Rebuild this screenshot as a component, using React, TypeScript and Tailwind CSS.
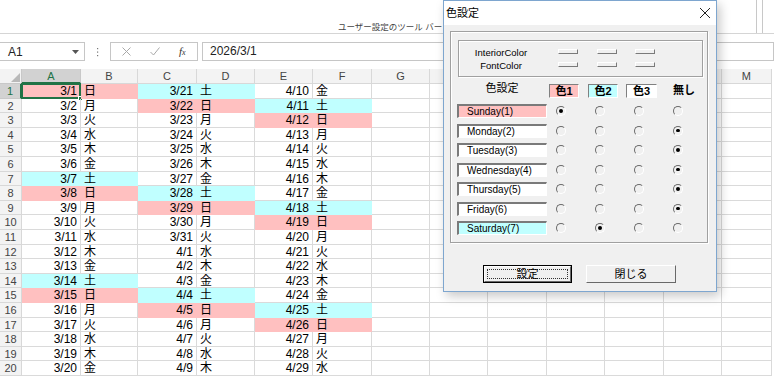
import React from 'react';

const DAYS = ['日', '月', '火', '水', '木', '金', '土'];
const LETTERS = ['A', 'B', 'C', 'D', 'E', 'F', 'G', 'H', 'I', 'J', 'K', 'L', 'M'];
const COLW = [
  'w-[59px]', 'w-[57px]', 'w-[59px]', 'w-[58px]', 'w-[58px]', 'w-[59px]', 'w-[58px]',
  'w-[58.4px]', 'w-[58.4px]', 'w-[58.4px]', 'w-[58.4px]', 'w-[58.4px]', 'w-[50px]',
];

const sheetFont = { fontFamily: '"Liberation Sans", "Noto Sans CJK JP", sans-serif' };
const uiFont = { fontFamily: '"Liberation Sans", "Noto Sans CJK JP", sans-serif' };

type Cell = { text: string; align: 'r' | 'l'; fill: string };

function fillFor(idx: number) {
  const d = idx % 7;
  if (d === 0) return 'bg-[#ffc0c0] border-[#ffc0c0]';
  if (d === 6) return 'bg-[#c0ffff] border-[#c0ffff]';
  return 'border-[#dadada]';
}

function buildRow(r: number): Cell[] {
  const out: Cell[] = [];
  const blocks = [
    { idx: r - 1, label: `3/${r}` },
    { idx: r + 19, label: r <= 11 ? `3/${20 + r}` : `4/${r - 11}` },
    { idx: r + 39, label: `4/${9 + r}` },
  ];
  blocks.forEach((b) => {
    const f = fillFor(b.idx);
    out.push({ text: b.label, align: 'r', fill: f });
    out.push({ text: DAYS[b.idx % 7], align: 'l', fill: f });
  });
  while (out.length < 13) out.push({ text: '', align: 'l', fill: 'border-[#dadada]' });
  return out;
}

const rows = Array.from({ length: 20 }, (_, i) => i + 1);

function Radio({ on }: { on?: boolean }) {
  return (
    <div className="w-[10px] h-[10px] rounded-full border border-t-[#6a6a6a] border-l-[#6a6a6a] border-r-[#ffffff] border-b-[#ffffff] bg-[#f0f0f0] flex items-center justify-center">
      {on && <div className="w-[3.5px] h-[3.5px] rounded-full bg-black" />}
    </div>
  );
}

function MiniBtn() {
  return <div className="w-[20px] h-[5px] border-t border-l border-t-white border-l-white border-b border-r border-b-[#7a7a7a] border-r-[#7a7a7a]" />;
}

const dayRows = [
  { name: 'Sunday(1)', bg: 'bg-[#ffc0c0]', sel: 0 },
  { name: 'Monday(2)', bg: 'bg-white', sel: 3 },
  { name: 'Tuesday(3)', bg: 'bg-white', sel: 3 },
  { name: 'Wednesday(4)', bg: 'bg-white', sel: 3 },
  { name: 'Thursday(5)', bg: 'bg-white', sel: 3 },
  { name: 'Friday(6)', bg: 'bg-white', sel: 3 },
  { name: 'Saturday(7)', bg: 'bg-[#c0ffff]', sel: 1 },
];

function ColorDialog() {
  return (
    <div
      className="absolute left-[443px] top-0 w-[274px] h-[292px] border border-[#7ea6cf] bg-[#f0f0f0] flex flex-col shadow-[3px_4px_10px_rgba(0,0,0,0.22)]"
      style={uiFont}
    >
      <div className="h-[24px] bg-white flex items-center justify-between pl-[2px] pr-[5px]">
        <span className="text-[11px] text-black">色設定</span>
        <svg width="12" height="12" viewBox="0 0 12 12">
          <path d="M1 1 L11 11 M11 1 L1 11" stroke="#222" strokeWidth="1" />
        </svg>
      </div>

      <div className="pl-[6px] pt-[6px]">
        {/* group */}
        <div className="w-[258px] h-[212px] border border-[#a0a0a0] shadow-[inset_1px_1px_0_#ffffff,1px_1px_0_#ffffff] pl-[6px] pt-[8px]">
          <div className="ml-[1px] w-[245px] h-[37px] border border-[#a0a0a0] shadow-[inset_1px_1px_0_#ffffff,1px_1px_0_#ffffff] pt-[5px]">
            {['InteriorColor', 'FontColor'].map((t) => (
              <div key={t} className="h-[13px] flex items-center">
                <div className="w-[84px] text-center text-[9.5px] leading-[13px] text-black">{t}</div>
                <div className="ml-[15px] flex gap-[18.5px] mb-[3px]">
                  <MiniBtn />
                  <MiniBtn />
                  <MiniBtn />
                </div>
              </div>
            ))}
          </div>

          {/* header row */}
          <div className="mt-[7px] flex h-[14px]">
            <div className="w-[90px] text-center text-[11px] leading-[9px] text-black">色設定</div>
            <div className="ml-[2px] w-[30px] h-[14px] bg-[#ffc0c0] border-t border-l border-t-[#808080] border-l-[#808080] border-b border-r border-b-white border-r-white text-center text-[11px] leading-[12px] font-bold">色1</div>
            <div className="ml-[9px] w-[30px] h-[14px] bg-[#c0ffff] border-t border-l border-t-[#808080] border-l-[#808080] border-b border-r border-b-white border-r-white text-center text-[11px] leading-[12px] font-bold">色2</div>
            <div className="ml-[8px] w-[31px] h-[14px] bg-white border-t border-l border-t-[#808080] border-l-[#808080] border-b border-r border-b-white border-r-white text-center text-[11px] leading-[12px] font-bold">色3</div>
            <div className="ml-[16px] text-[11px] leading-[12px] font-bold">無し</div>
          </div>

          <div className="mt-[6px] flex flex-col gap-[5.5px]">
            {dayRows.map((d) => (
              <div key={d.name} className="flex items-center h-[14px]">
                <div className={`w-[90px] h-[14px] ${d.bg} border-t-2 border-l-2 border-t-[#7a7a7a] border-l-[#7a7a7a] border-b border-r border-b-white border-r-white pl-[8px] text-[10px] leading-[11px] text-black`}>
                  {d.name}
                </div>
                <div className="ml-[9px] flex gap-[29px]">
                  {[0, 1, 2, 3].map((c) => (
                    <Radio key={c} on={d.sel === c} />
                  ))}
                </div>
              </div>
            ))}
          </div>
        </div>

        {/* buttons */}
        <div className="mt-[22px] ml-[33px] flex gap-[14px]">
          <div className="w-[89px] h-[18px] border border-black">
            <div className="w-full h-full border-t border-l border-t-white border-l-white border-b border-r border-b-[#696969] border-r-[#696969] p-[2px]">
              <div className="w-full h-full border border-dotted border-[#333] flex items-center justify-center text-[11px] text-black">設定</div>
            </div>
          </div>
          <div className="w-[90px] h-[18px] border-t border-l border-t-white border-l-white border-b border-r border-b-[#696969] border-r-[#696969] flex items-center justify-center text-[11px] text-black">
            閉じる
          </div>
        </div>
      </div>
    </div>
  );
}

export default function App() {
  return (
    <div className="relative w-[774px] h-[376px] overflow-hidden bg-white" style={sheetFont}>
      {/* ribbon strip */}
      <div className="h-[34px] border-b border-[#d5d5d5] flex">
        <div className="pl-[338px] pt-[21px] text-[8.5px] text-[#444] whitespace-nowrap">ユーザー設定のツール バー</div>
        <div className="ml-auto mr-[11px] w-[7px] h-full border-l border-r border-[#c8c8c8]" />
      </div>

      {/* formula bar */}
      <div className="h-[35px] pt-[8px] flex">
        <div className="w-[85px] h-[19px] border-y border-r border-[#c6c6c6] flex items-center justify-between pl-[8px] pr-[5px] text-[12px] text-[#222]">
          <span>A1</span>
          <svg width="7" height="4" viewBox="0 0 7 4">
            <path d="M0 0 L7 0 L3.5 4 Z" fill="#555" />
          </svg>
        </div>
        <div className="w-[25px] h-[19px] flex items-center justify-center">
          <svg width="3" height="10" viewBox="0 0 3 10">
            <rect x="1" y="1" width="1.2" height="1.2" fill="#777" />
            <rect x="1" y="4.5" width="1.2" height="1.2" fill="#777" />
            <rect x="1" y="8" width="1.2" height="1.2" fill="#777" />
          </svg>
        </div>
        <div className="w-[88px] h-[19px] border border-[#c6c6c6] flex items-center">
          <svg className="ml-[11px]" width="9" height="9" viewBox="0 0 9 9">
            <path d="M0.5 0.5 L8.5 8.5 M8.5 0.5 L0.5 8.5" stroke="#a8a8a8" strokeWidth="1" />
          </svg>
          <svg className="ml-[19px]" width="10" height="9" viewBox="0 0 10 9">
            <path d="M0.5 5 L3.5 8 L9.5 0.5" stroke="#a8a8a8" strokeWidth="1" fill="none" />
          </svg>
          <span className="ml-[19px] text-[11px] italic text-[#333]" style={{ fontFamily: '"Liberation Serif", serif' }}>
            f<span className="text-[8px]">x</span>
          </span>
        </div>
        <div className="ml-[4px] flex-1 h-[19px] border border-[#c6c6c6] pl-[7px] text-[12px] leading-[17px] text-[#222]">2026/3/1</div>
      </div>

      {/* grid */}
      <div className="flex flex-col">
        <div className="flex h-[15px]">
          <div className="w-[22px] h-full bg-[#f3f3f3] border-r border-b border-[#c8c8c8] flex items-end justify-end p-[1px]">
            <svg width="9" height="9" viewBox="0 0 9 9">
              <path d="M9 0 L9 9 L0 9 Z" fill="#b9b9b9" />
            </svg>
          </div>
          {LETTERS.map((l, i) => (
            <div
              key={l}
              className={`${COLW[i]} shrink-0 h-full text-center text-[11px] leading-[14px] ${
                i === 0
                  ? 'bg-[#d2d2d2] text-[#217346] border-b-2 border-b-[#217346] border-r border-r-[#c8c8c8]'
                  : 'bg-[#f3f3f3] text-[#444] border-r border-b border-[#d8d8d8]'
              }`}
            >
              {l}
            </div>
          ))}
        </div>
        {rows.map((r) => {
          const cells = buildRow(r);
          return (
            <div key={r} className="flex h-[14.6px]">
              <div
                className={`w-[22px] shrink-0 h-full text-center text-[11px] leading-[14px] ${
                  r === 1
                    ? 'bg-[#d2d2d2] text-[#217346] border-r-2 border-r-[#217346] border-b border-b-[#c8c8c8]'
                    : 'bg-[#f3f3f3] text-[#444] border-r border-b border-[#d8d8d8]'
                }`}
              >
                {r}
              </div>
              {cells.map((c, i) => (
                <div
                  key={i}
                  className={`${COLW[i]} shrink-0 h-full border-r border-b ${c.fill} text-[12px] leading-[14px] text-black whitespace-nowrap relative ${
                    c.align === 'r' ? 'text-right pr-[3px]' : 'pl-[3px]'
                  }`}
                >
                  {c.text}
                  {r === 1 && i === 0 && (
                    <>
                      <div className="absolute -left-[1px] -top-[1px] -right-[1px] -bottom-[1px] border-2 border-[#217346]" />
                      <div className="absolute -right-[3px] -bottom-[3px] w-[5px] h-[5px] bg-[#217346] border border-white" />
                    </>
                  )}
                </div>
              ))}
            </div>
          );
        })}
      </div>

      <ColorDialog />
    </div>
  );
}
